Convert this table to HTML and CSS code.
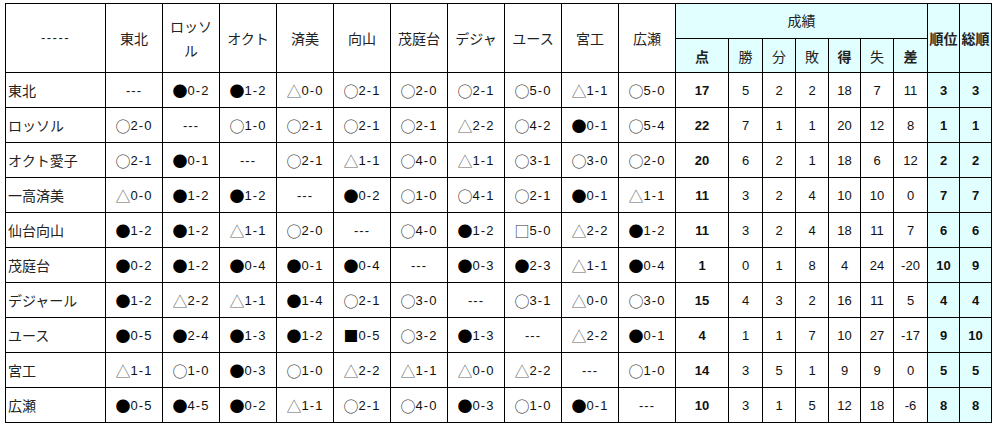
FILE: index.html
```html
<!DOCTYPE html>
<html lang="ja">
<head>
<meta charset="utf-8">
<title>星取表</title>
<link rel="stylesheet" href="styles.css">
</head>
<body>
<div class="page">
<div class="sheet">
  <div class="c hd span2 dash">-----</div>
  <div class="c hd span2">東北</div>
  <div class="c hd span2 wrap">ロッソ<br>ル</div>
  <div class="c hd span2">オクト</div>
  <div class="c hd span2">済美</div>
  <div class="c hd span2">向山</div>
  <div class="c hd span2">茂庭台</div>
  <div class="c hd span2">デジャ</div>
  <div class="c hd span2">ユース</div>
  <div class="c hd span2">宮工</div>
  <div class="c hd span2">広瀬</div>
  <div class="c hd cy seiseki">成績</div>
  <div class="c hd cy span2 b">順位</div>
  <div class="c hd cy span2 b">総順</div>
  <div class="c hd cy b">点</div>
  <div class="c hd cy">勝</div>
  <div class="c hd cy">分</div>
  <div class="c hd cy">敗</div>
  <div class="c hd cy b">得</div>
  <div class="c hd cy">失</div>
  <div class="c hd cy b">差</div>

  <div class="c lb">東北</div>
  <div class="c r">---</div><div class="c r"><span class="k">●</span>0-2</div><div class="c r"><span class="k">●</span>1-2</div><div class="c r"><span class="k t">△</span>0-0</div><div class="c r"><span class="k o">○</span>2-1</div><div class="c r"><span class="k o">○</span>2-0</div><div class="c r"><span class="k o">○</span>2-1</div><div class="c r"><span class="k o">○</span>5-0</div><div class="c r"><span class="k t">△</span>1-1</div><div class="c r"><span class="k o">○</span>5-0</div>
  <div class="c n b">17</div><div class="c n">5</div><div class="c n">2</div><div class="c n">2</div><div class="c n">18</div><div class="c n">7</div><div class="c n">11</div><div class="c n cy b">3</div><div class="c n cy b">3</div>

  <div class="c lb">ロッソル</div>
  <div class="c r"><span class="k o">○</span>2-0</div><div class="c r">---</div><div class="c r"><span class="k o">○</span>1-0</div><div class="c r"><span class="k o">○</span>2-1</div><div class="c r"><span class="k o">○</span>2-1</div><div class="c r"><span class="k o">○</span>2-1</div><div class="c r"><span class="k t">△</span>2-2</div><div class="c r"><span class="k o">○</span>4-2</div><div class="c r"><span class="k">●</span>0-1</div><div class="c r"><span class="k o">○</span>5-4</div>
  <div class="c n b">22</div><div class="c n">7</div><div class="c n">1</div><div class="c n">1</div><div class="c n">20</div><div class="c n">12</div><div class="c n">8</div><div class="c n cy b">1</div><div class="c n cy b">1</div>

  <div class="c lb">オクト愛子</div>
  <div class="c r"><span class="k o">○</span>2-1</div><div class="c r"><span class="k">●</span>0-1</div><div class="c r">---</div><div class="c r"><span class="k o">○</span>2-1</div><div class="c r"><span class="k t">△</span>1-1</div><div class="c r"><span class="k o">○</span>4-0</div><div class="c r"><span class="k t">△</span>1-1</div><div class="c r"><span class="k o">○</span>3-1</div><div class="c r"><span class="k o">○</span>3-0</div><div class="c r"><span class="k o">○</span>2-0</div>
  <div class="c n b">20</div><div class="c n">6</div><div class="c n">2</div><div class="c n">1</div><div class="c n">18</div><div class="c n">6</div><div class="c n">12</div><div class="c n cy b">2</div><div class="c n cy b">2</div>

  <div class="c lb">一高済美</div>
  <div class="c r"><span class="k t">△</span>0-0</div><div class="c r"><span class="k">●</span>1-2</div><div class="c r"><span class="k">●</span>1-2</div><div class="c r">---</div><div class="c r"><span class="k">●</span>0-2</div><div class="c r"><span class="k o">○</span>1-0</div><div class="c r"><span class="k o">○</span>4-1</div><div class="c r"><span class="k o">○</span>2-1</div><div class="c r"><span class="k">●</span>0-1</div><div class="c r"><span class="k t">△</span>1-1</div>
  <div class="c n b">11</div><div class="c n">3</div><div class="c n">2</div><div class="c n">4</div><div class="c n">10</div><div class="c n">10</div><div class="c n">0</div><div class="c n cy b">7</div><div class="c n cy b">7</div>

  <div class="c lb">仙台向山</div>
  <div class="c r"><span class="k">●</span>1-2</div><div class="c r"><span class="k">●</span>1-2</div><div class="c r"><span class="k t">△</span>1-1</div><div class="c r"><span class="k o">○</span>2-0</div><div class="c r">---</div><div class="c r"><span class="k o">○</span>4-0</div><div class="c r"><span class="k">●</span>1-2</div><div class="c r"><span class="k o">□</span>5-0</div><div class="c r"><span class="k t">△</span>2-2</div><div class="c r"><span class="k">●</span>1-2</div>
  <div class="c n b">11</div><div class="c n">3</div><div class="c n">2</div><div class="c n">4</div><div class="c n">18</div><div class="c n">11</div><div class="c n">7</div><div class="c n cy b">6</div><div class="c n cy b">6</div>

  <div class="c lb">茂庭台</div>
  <div class="c r"><span class="k">●</span>0-2</div><div class="c r"><span class="k">●</span>1-2</div><div class="c r"><span class="k">●</span>0-4</div><div class="c r"><span class="k">●</span>0-1</div><div class="c r"><span class="k">●</span>0-4</div><div class="c r">---</div><div class="c r"><span class="k">●</span>0-3</div><div class="c r"><span class="k">●</span>2-3</div><div class="c r"><span class="k t">△</span>1-1</div><div class="c r"><span class="k">●</span>0-4</div>
  <div class="c n b">1</div><div class="c n">0</div><div class="c n">1</div><div class="c n">8</div><div class="c n">4</div><div class="c n">24</div><div class="c n">-20</div><div class="c n cy b">10</div><div class="c n cy b">9</div>

  <div class="c lb">デジャール</div>
  <div class="c r"><span class="k">●</span>1-2</div><div class="c r"><span class="k t">△</span>2-2</div><div class="c r"><span class="k t">△</span>1-1</div><div class="c r"><span class="k">●</span>1-4</div><div class="c r"><span class="k o">○</span>2-1</div><div class="c r"><span class="k o">○</span>3-0</div><div class="c r">---</div><div class="c r"><span class="k o">○</span>3-1</div><div class="c r"><span class="k t">△</span>0-0</div><div class="c r"><span class="k o">○</span>3-0</div>
  <div class="c n b">15</div><div class="c n">4</div><div class="c n">3</div><div class="c n">2</div><div class="c n">16</div><div class="c n">11</div><div class="c n">5</div><div class="c n cy b">4</div><div class="c n cy b">4</div>

  <div class="c lb">ユース</div>
  <div class="c r"><span class="k">●</span>0-5</div><div class="c r"><span class="k">●</span>2-4</div><div class="c r"><span class="k">●</span>1-3</div><div class="c r"><span class="k">●</span>1-2</div><div class="c r"><span class="k">■</span>0-5</div><div class="c r"><span class="k o">○</span>3-2</div><div class="c r"><span class="k">●</span>1-3</div><div class="c r">---</div><div class="c r"><span class="k t">△</span>2-2</div><div class="c r"><span class="k">●</span>0-1</div>
  <div class="c n b">4</div><div class="c n">1</div><div class="c n">1</div><div class="c n">7</div><div class="c n">10</div><div class="c n">27</div><div class="c n">-17</div><div class="c n cy b">9</div><div class="c n cy b">10</div>

  <div class="c lb">宮工</div>
  <div class="c r"><span class="k t">△</span>1-1</div><div class="c r"><span class="k o">○</span>1-0</div><div class="c r"><span class="k">●</span>0-3</div><div class="c r"><span class="k o">○</span>1-0</div><div class="c r"><span class="k t">△</span>2-2</div><div class="c r"><span class="k t">△</span>1-1</div><div class="c r"><span class="k t">△</span>0-0</div><div class="c r"><span class="k t">△</span>2-2</div><div class="c r">---</div><div class="c r"><span class="k o">○</span>1-0</div>
  <div class="c n b">14</div><div class="c n">3</div><div class="c n">5</div><div class="c n">1</div><div class="c n">9</div><div class="c n">9</div><div class="c n">0</div><div class="c n cy b">5</div><div class="c n cy b">5</div>

  <div class="c lb">広瀬</div>
  <div class="c r"><span class="k">●</span>0-5</div><div class="c r"><span class="k">●</span>4-5</div><div class="c r"><span class="k">●</span>0-2</div><div class="c r"><span class="k t">△</span>1-1</div><div class="c r"><span class="k o">○</span>2-1</div><div class="c r"><span class="k o">○</span>4-0</div><div class="c r"><span class="k">●</span>0-3</div><div class="c r"><span class="k o">○</span>1-0</div><div class="c r"><span class="k">●</span>0-1</div><div class="c r">---</div>
  <div class="c n b">10</div><div class="c n">3</div><div class="c n">1</div><div class="c n">5</div><div class="c n">12</div><div class="c n">18</div><div class="c n">-6</div><div class="c n cy b">8</div><div class="c n cy b">8</div>
</div>
</div>
</body>
</html>
```

FILE: styles.css
```css
html, body {
  margin: 0;
  padding: 0;
  background: #fff;
}

.page {
  padding: 3px 0 0 5px;
}

.sheet {
  display: grid;
  width: max-content;
  grid-template-columns: 99px repeat(10, 56px) 52px 33px 32px 32px 31px 32px 33px 31px 31px;
  grid-template-rows: 34px 33px repeat(10, 34px);
  gap: 1px;
  padding: 1px;
  background: #000;
  font-family: "Liberation Sans", "Noto Sans CJK JP", sans-serif;
  font-size: 13px;
  color: #111;
}

.c {
  background: #fff;
  display: flex;
  align-items: center;
  justify-content: center;
  white-space: nowrap;
  overflow: hidden;
}

.hd {
  font-family: "Noto Sans CJK JP", sans-serif;
  font-size: 14px;
  color: #222;
}

.dash {
  font-family: "Liberation Sans", sans-serif;
  font-size: 13px;
  letter-spacing: 1.5px;
  padding-bottom: 2px;
}

.span2 {
  grid-row: span 2;
}

.wrap {
  text-align: center;
  line-height: 24px;
}

.seiseki {
  grid-column: span 7;
  padding-bottom: 2px;
}

.cy {
  background: #e1ffff;
}

.b {
  font-weight: bold;
}

.lb {
  justify-content: flex-start;
  padding-left: 2px;
  font-family: "Noto Sans CJK JP", sans-serif;
  font-size: 14px;
  color: #222;
}

.r {
  letter-spacing: 1px;
}

.k {
  font-family: "Noto Sans CJK JP", sans-serif;
  font-size: 15px;
  line-height: 1;
  letter-spacing: 0;
  margin-right: 0;
  color: #000;
}

.k.o {
  color: #333;
}

.k.t {
  color: #666;
}

.n {
  font-size: 13px;
}
```
